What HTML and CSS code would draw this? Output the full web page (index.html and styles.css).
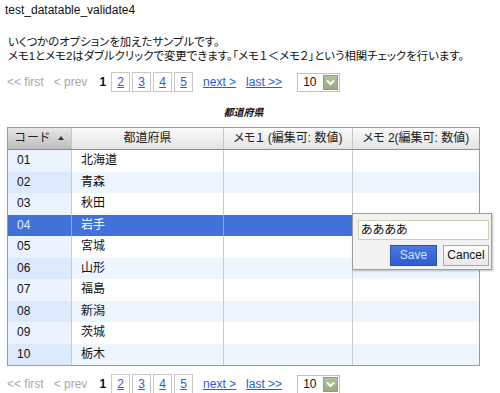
FILE: index.html
```html
<!DOCTYPE html>
<html lang="ja">
<head>
<meta charset="utf-8">
<link rel="stylesheet" href="styles.css">
</head>
<body>
<div class="title">test_datatable_validate4</div>
<div class="desc">
  <div>いくつかのオプションを加えたサンプルです。</div>
  <div>メモ1とメモ2はダブルクリックで変更できます。「メモ１＜メモ２」という相関チェックを行います。</div>
</div>

<div class="pager">
  <span class="dis first">&lt;&lt; first</span>
  <span class="dis prev">&lt; prev</span>
  <span class="cur">1</span>
  <a class="pg">2</a><a class="pg">3</a><a class="pg">4</a><a class="pg">5</a>
  <a class="lnk next">next &gt;</a>
  <a class="lnk last">last &gt;&gt;</a>
  <span class="sel"><span class="selv">10</span><span class="selb"><svg width="9" height="7" viewBox="0 0 9 7"><path d="M1 1.5 L4.5 5 L8 1.5" fill="none" stroke="#fff" stroke-width="2"/></svg></span></span>
</div>

<div class="caption">都道府県</div>

<div class="table">
  <div class="row head">
    <div class="c code sorted"><span class="kd">コード</span><span class="arrow"></span></div>
    <div class="c pref">都道府県</div>
    <div class="c m1">メモ１ (編集可: 数値)</div>
    <div class="c m2">メモ 2(編集可: 数値)</div>
  </div>
  <div class="row odd"><div class="c code">01</div><div class="c pref">北海道</div><div class="c m1"></div><div class="c m2"></div></div>
  <div class="row even"><div class="c code">02</div><div class="c pref">青森</div><div class="c m1"></div><div class="c m2"></div></div>
  <div class="row odd"><div class="c code">03</div><div class="c pref">秋田</div><div class="c m1"></div><div class="c m2"></div></div>
  <div class="row selrow"><div class="c code">04</div><div class="c pref">岩手</div><div class="c m1"></div><div class="c m2"></div></div>
  <div class="row odd"><div class="c code">05</div><div class="c pref">宮城</div><div class="c m1"></div><div class="c m2"></div></div>
  <div class="row even"><div class="c code">06</div><div class="c pref">山形</div><div class="c m1"></div><div class="c m2"></div></div>
  <div class="row odd"><div class="c code">07</div><div class="c pref">福島</div><div class="c m1"></div><div class="c m2"></div></div>
  <div class="row even"><div class="c code">08</div><div class="c pref">新潟</div><div class="c m1"></div><div class="c m2"></div></div>
  <div class="row odd"><div class="c code">09</div><div class="c pref">茨城</div><div class="c m1"></div><div class="c m2"></div></div>
  <div class="row even"><div class="c code">10</div><div class="c pref">栃木</div><div class="c m1"></div><div class="c m2"></div></div>

  <div class="editor">
    <div class="inp">ああああ</div>
    <div class="btns">
      <span class="btn save">Save</span>
      <span class="btn cancel">Cancel</span>
    </div>
  </div>
</div>

<div class="pager bottom">
  <span class="dis first">&lt;&lt; first</span>
  <span class="dis prev">&lt; prev</span>
  <span class="cur">1</span>
  <a class="pg">2</a><a class="pg">3</a><a class="pg">4</a><a class="pg">5</a>
  <a class="lnk next">next &gt;</a>
  <a class="lnk last">last &gt;&gt;</a>
  <span class="sel"><span class="selv">10</span><span class="selb"><svg width="9" height="7" viewBox="0 0 9 7"><path d="M1 1.5 L4.5 5 L8 1.5" fill="none" stroke="#fff" stroke-width="2"/></svg></span></span>
</div>
</body>
</html>
```
FILE: styles.css
```css
html, body {
  margin: 0;
  padding: 0;
  background: #fff;
}
body {
  font-family: "Liberation Sans", "Noto Sans CJK JP", sans-serif;
  font-size: 12px;
  color: #111;
  font-feature-settings: "palt";
}
.title {
  margin: 3px 0 0 5px;
  line-height: 14px;
}
.desc {
  margin-top: 18px;
  padding-left: 8px;
  line-height: 14px;
  font-size: 11.4px;
}
.pager {
  display: flex;
  align-items: center;
  height: 20px;
  margin-top: 9px;
  padding-left: 7px;
  line-height: 20px;
}
.pager.bottom {
  margin-top: 8px;
}
.dis {
  color: #a8a8a8;
}
.prev {
  margin-left: 10px;
}
.cur {
  font-weight: bold;
  margin-left: 12px;
  margin-right: 5px;
}
.pg {
  box-sizing: border-box;
  width: 19px;
  height: 20px;
  border: 1px solid #c8c8c8;
  text-align: center;
  line-height: 18px;
  color: #2a5cd6;
  text-decoration: underline;
  margin-right: 2px;
}
.lnk {
  color: #2a5cd6;
  text-decoration: underline;
}
.next {
  margin-left: 8px;
}
.last {
  margin-left: 10px;
}
.sel {
  box-sizing: border-box;
  display: flex;
  align-items: center;
  width: 43px;
  height: 19px;
  margin-left: 15px;
  border: 1px solid #bccaa5;
  background: #fff;
}
.selv {
  flex: 1;
  padding-left: 5px;
  line-height: 17px;
}
.selb {
  display: flex;
  align-items: center;
  justify-content: center;
  width: 15px;
  height: 15px;
  margin-right: 1px;
  background: linear-gradient(#b3c29d, #98aa80);
  border: 1px solid #8e9f77;
  box-sizing: border-box;
}
.caption {
  margin-top: 14px;
  width: 487px;
  text-align: center;
  font-size: 10px;
  font-weight: bold;
  font-style: italic;
  line-height: 14px;
}
.table {
  position: relative;
  box-sizing: border-box;
  width: 473px;
  margin: 7px 0 0 7px;
  border: 1px solid #9a9a9a;
}
.row {
  display: grid;
  grid-template-columns: 64px 152px 129px 126px;
  height: 21.5px;
}
.c {
  box-sizing: border-box;
  border-right: 1px solid #cbcbcb;
  padding-left: 9px;
  line-height: 21px;
  white-space: nowrap;
  overflow: hidden;
}
.c.m2 {
  border-right: none;
}
.row.head {
  height: 21px;
  border-bottom: 1px solid #8d8d8d;
  background: linear-gradient(#fbfbfb, #e3e3e3);
}
.row.head .c {
  padding-left: 0;
  text-align: center;
  line-height: 20px;
  border-right-color: #c7c7c7;
  color: #222;
}
.row.head .c.sorted {
  background: linear-gradient(#e7e7e7, #bdbdbd);
}
.kd {
  letter-spacing: 1px;
}
.arrow {
  display: inline-block;
  width: 0;
  height: 0;
  margin-left: 8px;
  vertical-align: 2px;
  border-left: 3px solid transparent;
  border-right: 3px solid transparent;
  border-bottom: 4px solid #333;
}
.row.odd { background: #fff; }
.row.even { background: #edf5ff; }
.row.odd .code { background: #eaf3ff; }
.row.even .code { background: #dce9fc; }
.row.selrow {
  background: #4271d9;
  color: #fff;
}
.row.selrow .code { color: #e6ecfa; }
.row.selrow .c { border-right-color: #8ea8e6; }
.editor {
  position: absolute;
  left: 344px;
  top: 85px;
  box-sizing: border-box;
  width: 140px;
  height: 57px;
  padding: 6px 2px 0 5px;
  background: #f2f2f2;
  border: 1px solid #9c9c9c;
  box-shadow: 1px 1px 2px rgba(0,0,0,0.25);
}
.inp {
  box-sizing: border-box;
  height: 20px;
  border: 1px solid #c5d6a8;
  background: #fff;
  padding-left: 2px;
  line-height: 18px;
  font-size: 12px;
  color: #111;
}
.btns {
  display: flex;
  justify-content: flex-end;
  gap: 6px;
  margin-top: 5px;
}
.btn {
  box-sizing: border-box;
  height: 21px;
  line-height: 19px;
  text-align: center;
}
.save {
  width: 47px;
  border: 1px solid #2a4fb5;
  background: linear-gradient(#4a77df, #2f5cd0);
  color: #dbe4fb;
}
.cancel {
  width: 46px;
  border: 1px solid #a8a8a8;
  background: linear-gradient(#ffffff, #e8e8e8);
  color: #111;
}
```
